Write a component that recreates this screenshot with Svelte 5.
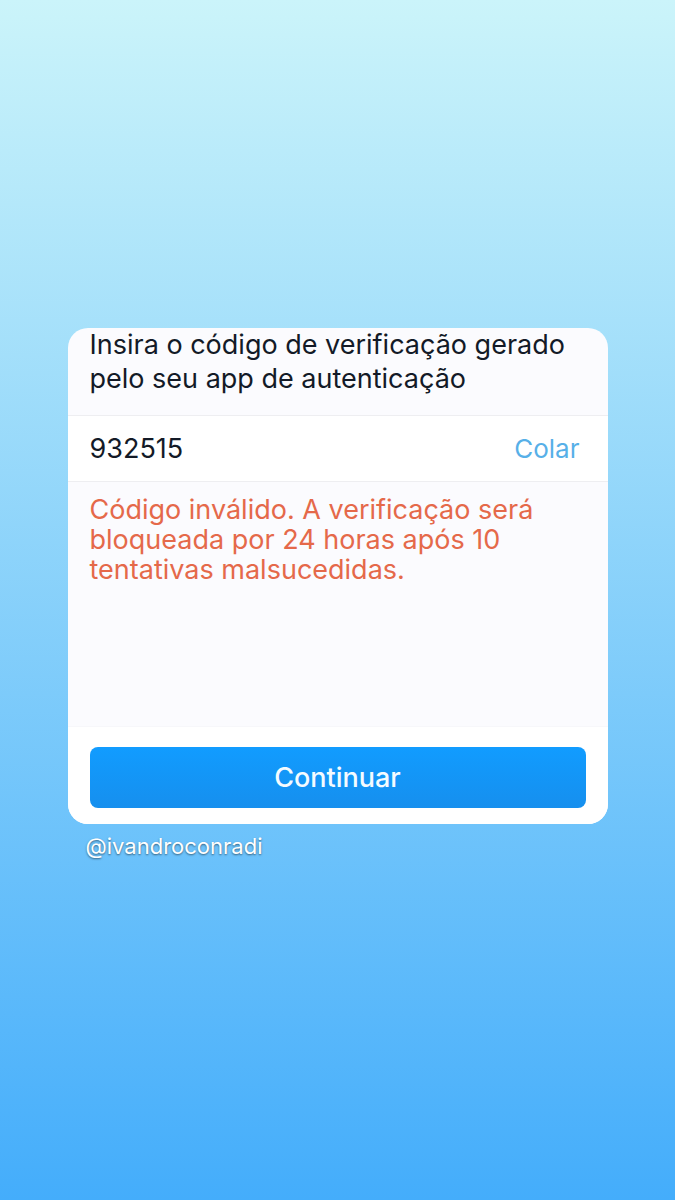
<script>
	let code = $state('932515');

	async function paste() {
		try {
			code = await navigator.clipboard.readText();
		} catch (err) {
			console.warn('Não foi possível ler a área de transferência', err);
		}
	}
</script>

<main class="story">
	<form class="card" onsubmit={(e) => e.preventDefault()}>
		<label class="prompt" for="code">Insira o código de verificação gerado pelo seu app de autenticação</label>

		<div class="field">
			<input id="code" inputmode="numeric" autocomplete="one-time-code" aria-describedby="code-error" bind:value={code} />
			<button type="button" class="paste" onclick={paste}>Colar</button>
		</div>

		<p class="error" id="code-error">Código inválido. A verificação será bloqueada por 24 horas após 10 tentativas malsucedidas.</p>

		<div class="footer">
			<button type="submit" class="submit">Continuar</button>
		</div>
	</form>

	<a class="mention" href="#ivandroconradi">@ivandroconradi</a>
</main>

<style>
	:global(body) {
		margin: 0;
	}

	.story {
		box-sizing: border-box;
		min-height: 100vh;
		padding: 328px 10% 0;
		background: linear-gradient(#cbf4fa, #44adfb);
		font-family: 'Inter', sans-serif;
	}

	.card {
		overflow: hidden;
		border-radius: 20px;
		background: #fbfbfe;
		color: #131a27;
		font-size: 27px;
	}

	.prompt {
		display: block;
		padding: 0 22px 19px;
		line-height: 34px;
	}

	.field {
		box-sizing: border-box;
		display: flex;
		align-items: center;
		height: 67px;
		padding: 0 28px 0 22px;
		border-top: 1px solid #eeeef1;
		border-bottom: 1px solid #eeeef1;
		background: #ffffff;
	}

	input {
		flex: 1;
		min-width: 0;
		padding: 0;
		border: 0;
		outline: 0;
		background: none;
		color: inherit;
		font: inherit;
	}

	button {
		border: 0;
		font: inherit;
		cursor: pointer;
	}

	.paste {
		padding: 0;
		background: none;
		color: #57b0e8;
		font-size: 26px;
	}

	.error {
		box-sizing: border-box;
		min-height: 244px;
		margin: 0;
		padding: 13px 22px;
		color: #e5694a;
		line-height: 30px;
	}

	.footer {
		padding: 20px 22px 16px;
		border-top: 1px solid #f7f7fa;
		background: #ffffff;
	}

	.submit {
		display: block;
		width: 100%;
		height: 61px;
		border-radius: 8px;
		background: linear-gradient(#119cff, #168fee);
		color: #f4fbff;
		font-weight: 500;
	}

	.mention {
		display: inline-block;
		margin: 8px 18px;
		color: #ffffff;
		font-size: 22px;
		line-height: 28px;
		text-decoration: none;
		text-shadow: 0 1px 2px rgba(0, 0, 0, 0.5);
	}
</style>
